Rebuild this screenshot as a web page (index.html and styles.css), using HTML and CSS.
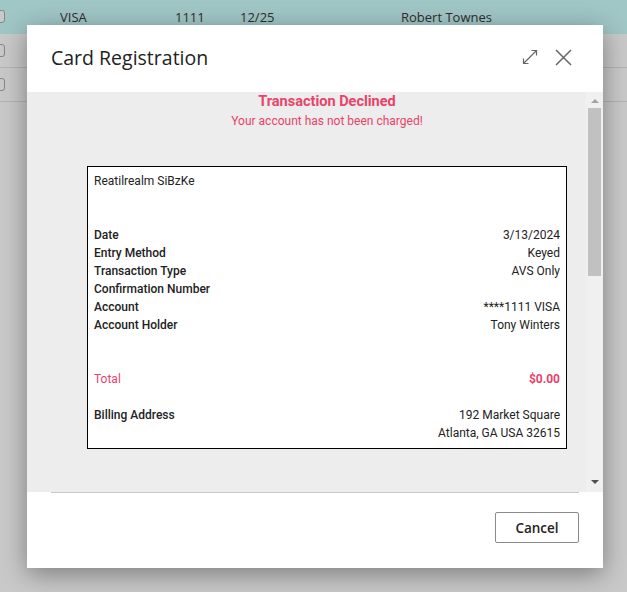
FILE: index.html
```html
<!DOCTYPE html>
<html lang="en">
<head>
    <meta charset="UTF-8">
    <meta name="viewport" content="width=device-width, initial-scale=1.0">
    <title>Card Registration</title>
    <link rel="stylesheet" href="styles.css">
</head>
<body>
    <div class="grid">
        <div class="grid-row selected">
            <span class="check"></span>
            <span class="cell c-type">VISA</span>
            <span class="cell c-last">1111</span>
            <span class="cell c-exp">12/25</span>
            <span class="cell c-name">Robert Townes</span>
        </div>
        <div class="grid-row"><span class="check"></span></div>
        <div class="grid-row"><span class="check"></span></div>
        <div class="grid-row empty"></div>
    </div>

    <div class="backdrop"></div>

    <div class="modal">
        <div class="modal-header">
            <h2>Card Registration</h2>
            <div class="header-actions">
                <svg class="icon" width="16" height="16" viewBox="0 0 16 16">
                    <path d="M1.5 14.5 L14.5 1.5 M9.5 1.5 H14.5 V6.5 M1.5 9.5 V14.5 H6.5" fill="none" stroke="#666" stroke-width="1.2"/>
                </svg>
                <svg class="icon" width="17" height="17" viewBox="0 0 17 17">
                    <path d="M1 1 L16 16 M16 1 L1 16" fill="none" stroke="#666" stroke-width="1.5"/>
                </svg>
            </div>
        </div>

        <div class="modal-body">
            <div class="content">
                <div class="status-title">Transaction Declined</div>
                <div class="status-sub">Your account has not been charged!</div>

                <div class="receipt">
                    <div class="merchant">Reatilrealm SiBzKe</div>
                    <div class="gap2"></div>
                    <div class="line"><span class="label">Date</span><span>3/13/2024</span></div>
                    <div class="line"><span class="label">Entry Method</span><span>Keyed</span></div>
                    <div class="line"><span class="label">Transaction Type</span><span>AVS Only</span></div>
                    <div class="line"><span class="label">Confirmation Number</span><span></span></div>
                    <div class="line"><span class="label">Account</span><span>****1111 VISA</span></div>
                    <div class="line"><span class="label">Account Holder</span><span>Tony Winters</span></div>
                    <div class="gap2"></div>
                    <div class="line total"><span>Total</span><span class="amount">$0.00</span></div>
                    <div class="gap1"></div>
                    <div class="line"><span class="label">Billing Address</span><span>192 Market Square</span></div>
                    <div class="line"><span></span><span>Atlanta, GA USA 32615</span></div>
                </div>
            </div>

            <div class="scrollbar">
                <span class="arrow up"></span>
                <div class="track"><div class="thumb"></div></div>
                <span class="arrow down"></span>
            </div>
        </div>

        <div class="modal-footer">
            <button class="btn-cancel">Cancel</button>
        </div>
    </div>
</body>
</html>
```

FILE: styles.css
```css
* {
    margin: 0;
    padding: 0;
    box-sizing: border-box;
}

body {
    font-family: 'Open Sans', 'Liberation Sans', sans-serif;
    background: #fff;
    width: 627px;
    height: 592px;
    overflow: hidden;
    position: relative;
}

/* underlying grid */
.grid-row {
    height: 34px;
    display: flex;
    align-items: center;
    border-bottom: 1px solid #e4e4e4;
    font-size: 13px;
    color: #3a3a3a;
    position: relative;
}

.grid-row.selected {
    background: #cdfbfc;
    border-bottom-color: #cdfbfc;
}

.grid-row.empty {
    border-bottom: none;
}

.check {
    position: absolute;
    left: -6px;
    top: 10px;
    width: 11px;
    height: 13px;
    border: 1px solid #aaa;
    border-radius: 3px;
    background: #fff;
}

.cell {
    position: absolute;
    top: 8px;
}

.c-type { left: 60px; }
.c-last { left: 175px; }
.c-exp { left: 240px; }
.c-name { left: 401px; }

.backdrop {
    position: absolute;
    inset: 0;
    background: rgba(0, 0, 0, 0.21);
}

/* modal */
.modal {
    position: absolute;
    left: 27px;
    top: 25px;
    width: 576px;
    height: 543px;
    background: #fff;
    box-shadow: 0 6px 24px rgba(0, 0, 0, 0.38);
    display: flex;
    flex-direction: column;
}

.modal-header {
    height: 67px;
    display: flex;
    align-items: center;
    justify-content: space-between;
    padding: 0 31px 0 24px;
}

.modal-header h2 {
    font-size: 19.5px;
    font-weight: 400;
    color: #222;
    margin-top: -2px;
}

.header-actions {
    display: flex;
    align-items: center;
    gap: 17px;
    margin-top: -3px;
}

.icon {
    display: block;
}

.modal-body {
    height: 400px;
    background: #ededed;
    display: flex;
}

.content {
    flex: 1;
    padding: 1px 7px 0 48px;
    font-family: Roboto, 'Liberation Sans', sans-serif;
    text-align: center;
    overflow: hidden;
}

.status-title {
    color: #e8436b;
    font-size: 14.5px;
    font-weight: 700;
    line-height: 18px;
}

.status-sub {
    color: #e8436b;
    font-size: 12px;
    line-height: 16px;
    margin-top: 2px;
}

.receipt {
    width: 480px;
    margin: 37px auto 0;
    background: #fff;
    border: 1px solid #000;
    padding: 5px 6px 6px 6px;
    text-align: left;
    font-size: 12px;
    line-height: 18px;
    color: #222;
}

.gap1 { height: 18px; }
.gap2 { height: 36px; }

.line {
    display: flex;
    justify-content: space-between;
    min-height: 18px;
}

.label {
    font-weight: 500;
}

.total {
    color: #e8436b;
}

.amount {
    font-weight: 700;
}

/* classic scrollbar */
.scrollbar {
    width: 17px;
    background: #f0f0f0;
    display: flex;
    flex-direction: column;
    align-items: center;
}

.arrow {
    width: 0;
    height: 0;
    border-left: 4px solid transparent;
    border-right: 4px solid transparent;
    margin: 7px 0;
}

.arrow.up {
    border-bottom: 4px solid #a3a3a3;
    margin-top: 7px;
    margin-bottom: 5px;
}

.arrow.down {
    border-top: 4px solid #505050;
    margin-top: 5px;
    margin-bottom: 8px;
}

.track {
    flex: 1;
    width: 100%;
    padding: 0 2px;
}

.thumb {
    height: 168px;
    background: #c1c1c1;
}

.modal-footer {
    flex: 1;
    margin: 0 24px;
    border-top: 1px solid #c8c8c8;
    display: flex;
    justify-content: flex-end;
    align-items: flex-start;
    padding-top: 19px;
}

.btn-cancel {
    width: 84px;
    height: 31px;
    background: #fff;
    border: 1px solid #8a8a8a;
    border-radius: 2px;
    font-family: 'Open Sans', 'Liberation Sans', sans-serif;
    font-size: 13.5px;
    font-weight: 600;
    color: #222;
}
```
